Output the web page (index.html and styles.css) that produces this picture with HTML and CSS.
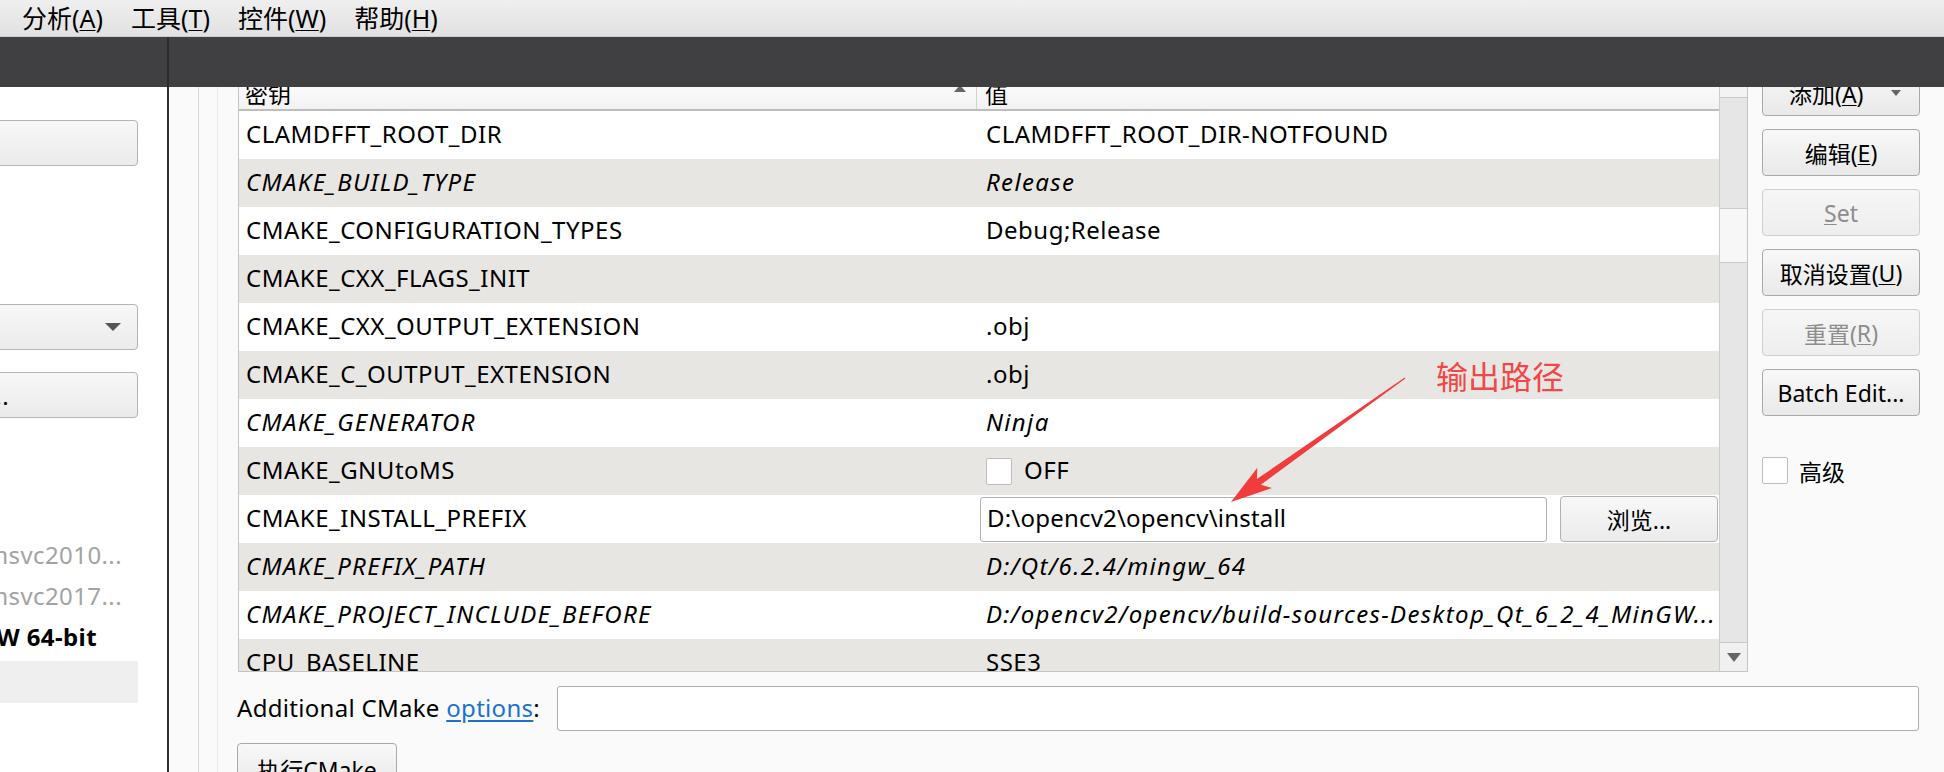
FILE: index.html
```html
<!DOCTYPE html>
<html lang="zh">
<head>
<meta charset="utf-8">
<title>CMake</title>
<link rel="stylesheet" href="styles.css">
</head>
<body>
<div class="menubar">
  <span class="menu">分析(<u>A</u>)</span>
  <span class="menu">工具(<u>T</u>)</span>
  <span class="menu">控件(<u>W</u>)</span>
  <span class="menu">帮助(<u>H</u>)</span>
</div>
<div class="topbar">
  <div class="tb-left"></div>
  <div class="tb-sep"></div>
  <div class="tb-right"></div>
</div>
<div class="workspace">
  <aside class="leftpanel">
    <div class="lbtn"></div>
    <div class="lbtn combo"><svg class="combo-arrow" width="16" height="8" viewBox="0 0 16 8"><path d="M0 0H16L8 8Z" fill="#555"/></svg></div>
    <div class="lbtn dots"><span>Manage...</span></div>
    <div class="kits">
      <div class="kit muted"><span>Desktop Qt 5.15.2 msvc2010...</span></div>
      <div class="kit muted"><span>Desktop Qt 6.2.4 msvc2017...</span></div>
      <div class="kit active"><span>Desktop Qt 6.2.4 MinGW 64-bit</span></div>
      <div class="kit sel"></div>
    </div>
  </aside>
  <div class="vsep"></div>
  <main class="main">
    <div class="gutter"></div>
    <div class="gutter2"></div>
    <div class="content">
      <div class="upper">
        <div class="table">
          <div class="tcol">
            <div class="thead">
              <div class="h-key"><span>密钥</span><svg class="sort" width="12" height="7" viewBox="0 0 12 7"><path d="M0 7L6 0L12 7Z" fill="#666"/></svg></div>
              <div class="h-val">值</div>
            </div>
            <div class="rows">
              <div class="row"><div class="k">CLAMDFFT_ROOT_DIR</div><div class="v">CLAMDFFT_ROOT_DIR-NOTFOUND</div></div>
              <div class="row alt it"><div class="k">CMAKE_BUILD_TYPE</div><div class="v">Release</div></div>
              <div class="row"><div class="k">CMAKE_CONFIGURATION_TYPES</div><div class="v">Debug;Release</div></div>
              <div class="row alt"><div class="k">CMAKE_CXX_FLAGS_INIT</div><div class="v"></div></div>
              <div class="row"><div class="k">CMAKE_CXX_OUTPUT_EXTENSION</div><div class="v">.obj</div></div>
              <div class="row alt"><div class="k">CMAKE_C_OUTPUT_EXTENSION</div><div class="v">.obj</div></div>
              <div class="row it"><div class="k">CMAKE_GENERATOR</div><div class="v">Ninja</div></div>
              <div class="row alt"><div class="k">CMAKE_GNUtoMS</div><div class="v"><span class="cb"></span><span class="cb-label">OFF</span></div></div>
              <div class="row"><div class="k">CMAKE_INSTALL_PREFIX</div><div class="v edit"><div class="path-input">D:\opencv2\opencv\install</div><div class="browse">浏览...</div></div></div>
              <div class="row alt it"><div class="k">CMAKE_PREFIX_PATH</div><div class="v">D:/Qt/6.2.4/mingw_64</div></div>
              <div class="row it"><div class="k">CMAKE_PROJECT_INCLUDE_BEFORE</div><div class="v">D:/opencv2/opencv/build-sources-Desktop_Qt_6_2_4_MinGW...</div></div>
              <div class="row alt"><div class="k">CPU_BASELINE</div><div class="v">SSE3</div></div>
            </div>
          </div>
          <div class="scrollbar">
            <div class="sb-up"></div>
            <div class="sb-track"><div class="sb-thumb"></div></div>
            <div class="sb-down"><svg width="14" height="9" viewBox="0 0 14 9"><path d="M0 0H14L7 9Z" fill="#666"/></svg></div>
          </div>
        </div>
        <div class="btns">
          <div class="btn add"><span>添加(<u>A</u>)</span><svg class="dd" width="10" height="6" viewBox="0 0 10 6"><path d="M0 0H10L5 6Z" fill="#666"/></svg></div>
          <div class="btn">编辑(<u>E</u>)</div>
          <div class="btn disabled"><u>S</u>et</div>
          <div class="btn">取消设置(<u>U</u>)</div>
          <div class="btn disabled">重置(<u>R</u>)</div>
          <div class="btn">Batch Edit...</div>
          <div class="adv"><span class="cb"></span><span class="adv-label">高级</span></div>
        </div>
      </div>
      <div class="options">
        <span class="opt-label">Additional CMake <a class="link">options</a>:</span>
        <div class="opt-input"></div>
      </div>
      <div class="btn run">执行CMake</div>
    </div>
  </main>
</div>
<svg class="annot-arrow" width="1944" height="772" viewBox="0 0 1944 772">
  <polygon points="1405.3,378.4 1260.9,484.7 1272,488 1231,502 1257.3,467.8 1256.9,479 1404.7,377.6" fill="#f03c3c"/>
</svg>
<div class="annot-text">输出路径</div>
</body>
</html>
```
FILE: styles.css
```css
* { box-sizing: border-box; }
html, body { margin: 0; padding: 0; }
body {
  width: 1944px;
  height: 772px;
  overflow: hidden;
  position: relative;
  font-family: "Noto Sans", "Noto Sans CJK SC", sans-serif;
  font-size: 23px;
  color: #000;
  background: #fafafa;
}
u { text-decoration: underline; text-underline-offset: 2px; text-decoration-thickness: 1px; }

.menubar {
  height: 37px;
  display: flex;
  align-items: center;
  gap: 28px;
  padding-left: 22px;
  padding-bottom: 3px;
  background: linear-gradient(#efefef, #e1e1e1);
  border-bottom: 1px solid #cdcdcd;
  font-size: 25px;
}

.topbar { height: 50px; display: flex; }
.tb-left { width: 167px; background: #404042; }
.tb-sep { width: 2px; background: #2b2b2c; }
.tb-right { flex: 1; background: #404042; }

.workspace { height: 685px; display: flex; }

.leftpanel {
  width: 167px;
  background: #fff;
  overflow: hidden;
  padding-top: 33px;
  font-size: 24px;
  letter-spacing: 0.4px;
}
.lbtn {
  width: 180px;
  height: 46px;
  margin-left: -42px;
  border: 1px solid #b4b4b4;
  border-radius: 4px;
  background: linear-gradient(#f7f7f7, #ebebeb);
  display: flex;
  align-items: center;
}
.combo { margin-top: 138px; justify-content: flex-end; padding-right: 16px; }
.dots { margin-top: 22px; justify-content: flex-end; padding-right: 128px; white-space: nowrap; }
.kits { margin-top: 117px; }
.kit {
  width: 138px;
  height: 41px;
  display: flex;
  align-items: center;
  justify-content: flex-end;
  white-space: nowrap;
  padding-right: 16px;
  padding-bottom: 3px;
}
.kit.muted { color: #a3a3a3; }
.kit.active { font-weight: bold; padding-right: 41px; }
.kit.sel { height: 42px; margin-top: 3px; background: #efefef; }

.vsep { width: 2px; background: #2e2e2e; }

.main { flex: 1; display: flex; overflow: hidden; background: #fafafa; }
.gutter { width: 30px; border-right: 1px solid #d6d6d6; }
.gutter2 { width: 19px; border-right: 1px solid #e9e9e9; }
.content { margin-left: 20px; flex: 1; display: flex; flex-direction: column; }

.upper { display: flex; align-items: flex-start; margin-top: -10px; }
.table {
  width: 1510px;
  height: 595px;
  display: flex;
  border: 1px solid #c4c4c4;
  border-top: none;
  background: #fff;
}
.tcol { width: 1480px; display: flex; flex-direction: column; overflow: hidden; }
.thead {
  height: 34px;
  flex: none;
  display: flex;
  border-bottom: 2px solid #bdbdbd;
  background: linear-gradient(#ffffff, #f2f2f2);
}
.h-key {
  width: 738px;
  display: flex;
  align-items: center;
  padding-left: 6px;
  padding-right: 10px;
  border-right: 1px solid #d3d3d3;
}
.h-key .sort { margin-left: auto; align-self: flex-start; margin-top: 8px; }
.h-val { flex: 1; display: flex; align-items: center; padding-left: 8px; }

.rows { flex: 1; overflow: hidden; font-size: 24px; letter-spacing: 0.5px; }
.row { height: 48px; display: flex; align-items: center; white-space: nowrap; }
.row.alt { background: #e8e6e3; }
.row.it { font-style: italic; letter-spacing: 1.35px; }
.k { width: 738px; padding-left: 7px; padding-bottom: 4px; }
.v { flex: 1; padding-left: 9px; padding-bottom: 4px; display: flex; align-items: center; overflow: hidden; }
.v.edit { padding-left: 3px; padding-right: 0; padding-bottom: 0; }
.path-input {
  width: 567px;
  height: 45px;
  border: 1px solid #b1b1b1;
  border-radius: 3px;
  background: #fff;
  display: flex;
  align-items: center;
  padding-left: 6px;
  padding-bottom: 3px;
  letter-spacing: 0.2px;
}
.browse {
  margin-left: 13px;
  width: 158px;
  height: 46px;
  border: 1px solid #b1b1b1;
  border-radius: 4px;
  background: linear-gradient(#f8f8f8, #ebebeb);
  display: flex;
  align-items: center;
  justify-content: center;
  font-size: 23px;
  letter-spacing: 0;
}
.cb {
  display: inline-block;
  width: 26px;
  height: 27px;
  border: 1px solid #bdbdbd;
  background: #fff;
  border-radius: 2px;
}
.v .cb { margin-top: 4px; }
.cb-label { margin-left: 12px; font-style: normal; }

.scrollbar {
  width: 28px;
  display: flex;
  flex-direction: column;
  border-left: 1px solid #cdcdcd;
  background: #e6e6e6;
}
.sb-up { height: 21px; background: #f3f3f3; border-bottom: 1px solid #cacaca; }
.sb-track { flex: 1; }
.sb-thumb { margin-top: 110px; height: 55px; background: #f7f7f7; border-top: 1px solid #cbcbcb; border-bottom: 1px solid #cbcbcb; }
.sb-down {
  height: 29px;
  background: #f0f0f0;
  border-top: 1px solid #c8c8c8;
  display: flex;
  align-items: center;
  justify-content: center;
}

.btns {
  width: 158px;
  margin-left: 14px;
  margin-top: -8px;
  display: flex;
  flex-direction: column;
  gap: 13px;
}
.btn {
  height: 47px;
  border: 1px solid #a9a9a9;
  border-radius: 4px;
  background: linear-gradient(#f8f8f8, #e9e9e9);
  display: flex;
  align-items: center;
  justify-content: center;
  white-space: nowrap;
}
.btn.disabled { color: #8d8d8d; border-color: #cfcfcf; background: linear-gradient(#f6f6f6, #eeeeee); }
.btn.add { justify-content: flex-start; padding-left: 26px; }
.btn.add .dd { margin-left: auto; margin-right: 18px; }
.adv { margin-top: 28px; display: flex; align-items: center; height: 27px; }
.adv-label { margin-left: 11px; }

.options { display: flex; align-items: center; margin-top: 14px; height: 45px; }
.opt-label { white-space: nowrap; margin-left: -1px; font-size: 24px; letter-spacing: 0.3px; padding-bottom: 3px; }
.link { color: #1a73d0; text-decoration: underline; text-underline-offset: 3px; }
.opt-input {
  flex: 1;
  height: 45px;
  margin-left: 17px;
  margin-right: 25px;
  border: 1px solid #aeaeae;
  border-radius: 3px;
  background: #fff;
}
.btn.run { width: 160px; margin-top: 12px; margin-left: -1px; align-items: flex-start; padding-top: 8px; }

.annot-arrow { position: absolute; left: 0; top: 0; pointer-events: none; }
.annot-text {
  position: absolute;
  left: 1436px;
  top: 353px;
  font-family: "Noto Sans CJK SC", sans-serif;
  font-size: 32px;
  color: #f04848;
  line-height: 44px;
}
```
